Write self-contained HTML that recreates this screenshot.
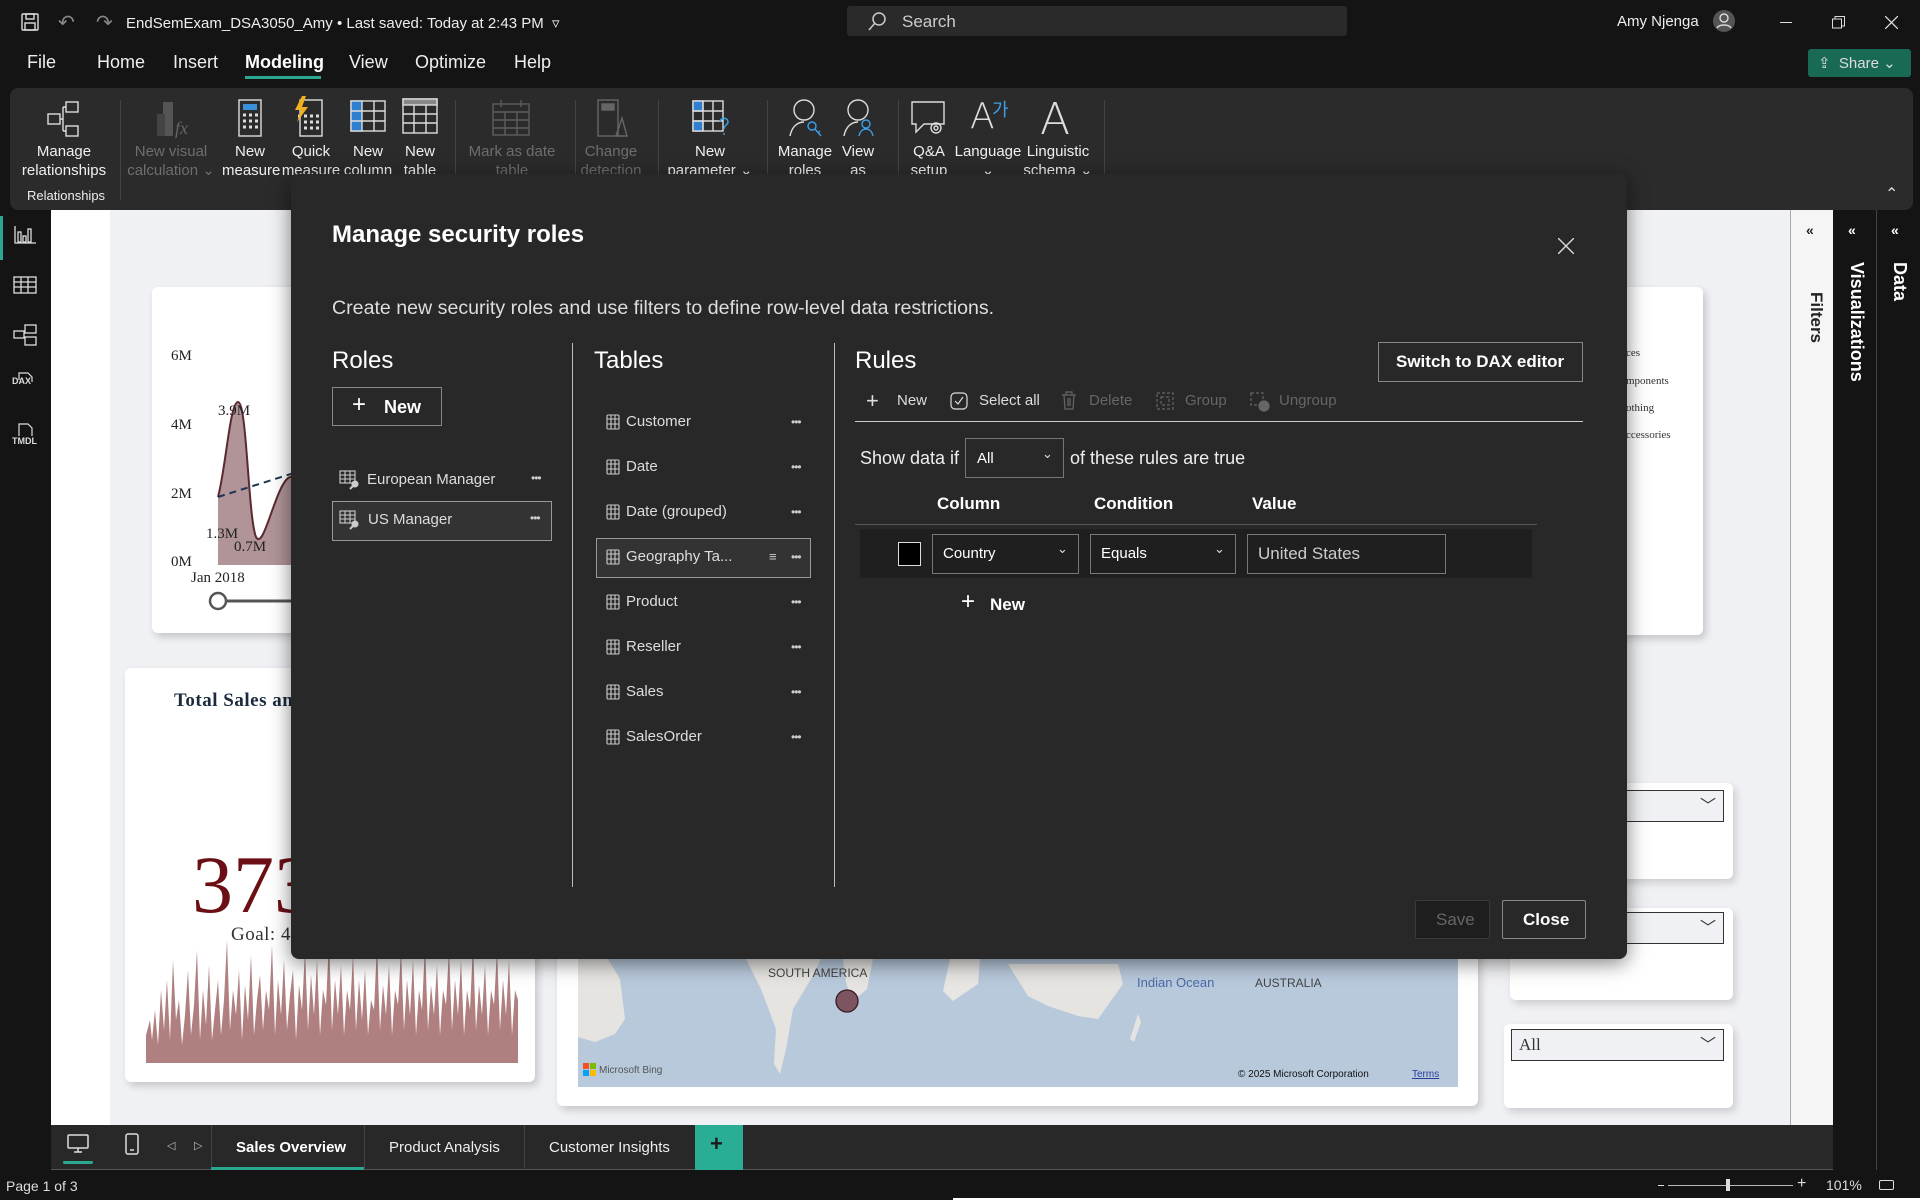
<!DOCTYPE html>
<html><head><meta charset="utf-8">
<style>
*{margin:0;padding:0;box-sizing:border-box}
body{width:1920px;height:1200px;overflow:hidden;background:#141414;font-family:"Liberation Sans",sans-serif;position:relative;color:#fff}
.a{position:absolute}
.t{position:absolute;white-space:nowrap}
.rl{position:absolute;font-size:15px;color:#f0f0f0;text-align:center;line-height:19px;white-space:nowrap}
.rl.g{color:#6e6e6e}
.dv{position:absolute;top:100px;width:1px;height:100px;background:#444}
.tb{position:absolute;left:606px;font-size:15px;color:#ddd}
.tb svg{position:absolute;left:0;top:1px}
.tb span{position:absolute;left:20px;top:0;white-space:nowrap}
.dots{position:absolute;left:791px;font-size:12px;color:#ccc;letter-spacing:-1px}
.serif{font-family:"Liberation Serif",serif}
</style></head><body>

<div class="a" style="left:0;top:0;width:1920px;height:44px;background:#141414"></div>
<svg class="a" style="left:20px;top:12px" width="20" height="20" viewBox="0 0 20 20" fill="none" stroke="#ddd" stroke-width="1.4"><rect x="2" y="2" width="16" height="16" rx="1"/><rect x="6" y="2" width="8" height="5"/><rect x="5" y="11" width="10" height="7"/></svg>
<div class="t" style="left:58px;top:10px;font-size:20px;color:#888">↶</div>
<div class="t" style="left:96px;top:10px;font-size:20px;color:#888">↷</div>
<div class="t" style="left:126px;top:14px;font-size:15px;color:#eee">EndSemExam_DSA3050_Amy • Last saved: Today at 2:43 PM &nbsp;▿</div>
<div class="a" style="left:847px;top:6px;width:500px;height:30px;background:#2a2a2a;border-radius:3px"></div>
<svg class="a" style="left:866px;top:11px" width="22" height="22" viewBox="0 0 22 22" fill="none" stroke="#ccc" stroke-width="1.5"><circle cx="13" cy="8" r="6"/><path d="M9 12 3 19"/></svg>
<div class="t" style="left:902px;top:12px;font-size:17px;color:#ccc">Search</div>
<div class="t" style="left:1617px;top:13px;font-size:15px;color:#eee">Amy Njenga</div>
<svg class="a" style="left:1712px;top:9px" width="24" height="24" viewBox="0 0 24 24"><circle cx="12" cy="12" r="11" fill="#555"/><circle cx="12" cy="9" r="4" fill="none" stroke="#ddd" stroke-width="1.4"/><path d="M5 19c2-4 12-4 14 0" fill="none" stroke="#ddd" stroke-width="1.4"/></svg>
<div class="a" style="left:1780px;top:22px;width:12px;height:1px;background:#ddd"></div>
<svg class="a" style="left:1832px;top:16px" width="13" height="13" viewBox="0 0 13 13" fill="none" stroke="#ddd"><rect x="0.5" y="3" width="9" height="9"/><path d="M3 3V.5h9.5V10H10"/></svg>
<svg class="a" style="left:1885px;top:16px" width="13" height="13" viewBox="0 0 13 13" stroke="#ddd" stroke-width="1.3"><path d="M0 0 13 13M13 0 0 13"/></svg>

<div class="t" style="left:27px;top:52px;font-size:18px;color:#eee">File</div>
<div class="t" style="left:97px;top:52px;font-size:18px;color:#eee">Home</div>
<div class="t" style="left:173px;top:52px;font-size:18px;color:#eee">Insert</div>
<div class="t" style="left:245px;top:52px;font-size:18px;color:#fff;font-weight:bold">Modeling</div>
<div class="a" style="left:245px;top:76px;width:76px;height:3px;background:#2aa88f"></div>
<div class="t" style="left:349px;top:52px;font-size:18px;color:#eee">View</div>
<div class="t" style="left:415px;top:52px;font-size:18px;color:#eee">Optimize</div>
<div class="t" style="left:514px;top:52px;font-size:18px;color:#eee">Help</div>
<div class="a" style="left:1808px;top:49px;width:103px;height:28px;background:#196a55;border-radius:3px"></div>
<div class="t" style="left:1818px;top:54px;font-size:15px;color:#ddd">⇪&nbsp; Share ⌄</div>

<div class="a" style="left:10px;top:88px;width:1903px;height:122px;background:#2b2b2b;border-radius:8px"></div>
<svg class="a" style="left:46px;top:100px" width="38" height="38" viewBox="0 0 38 38" fill="none" stroke="#ddd" stroke-width="1.4"><rect x="20" y="2" width="12" height="10"/><rect x="2" y="14" width="12" height="10"/><rect x="20" y="26" width="12" height="10"/><path d="M14 19h3M17 7v24M17 7h3M17 31h3"/></svg>
<div class="rl" style="left:14px;top:142px;width:100px">Manage<br>relationships</div>
<div class="t" style="left:27px;top:188px;font-size:13px;color:#eee">Relationships</div>
<div class="dv" style="left:120px"></div>
<svg class="a" style="left:155px;top:100px" width="34" height="38" viewBox="0 0 34 38"><rect x="8" y="2" width="10" height="34" fill="#555"/><rect x="2" y="14" width="8" height="22" fill="#444"/><text x="20" y="34" font-family="Liberation Serif" font-style="italic" font-size="18" fill="#666">fx</text></svg>
<div class="rl g" style="left:126px;top:142px;width:90px">New visual<br>calculation ⌄</div>
<svg class="a" style="left:237px;top:98px" width="26" height="40" viewBox="0 0 26 40" fill="none" stroke="#ddd" stroke-width="1.4"><rect x="2" y="2" width="22" height="36"/><rect x="6" y="6" width="14" height="6" fill="#3a8fd9" stroke="none"/><path d="M6 17h3M12 17h3M18 17h3M6 23h3M12 23h3M18 23h3M6 29h3M12 29h3M18 29h3" stroke-width="3"/></svg>
<div class="rl" style="left:222px;top:142px;width:56px">New<br>measure</div>
<svg class="a" style="left:292px;top:96px" width="34" height="42" viewBox="0 0 34 42" fill="none" stroke="#ddd" stroke-width="1.4"><rect x="8" y="4" width="22" height="36"/><path d="M6 20h3M12 20h3M18 20h3M24 20h3M12 26h3M18 26h3M24 26h3M12 32h3M18 32h3M24 32h3" stroke-width="3"/><path d="M10 0 3 14h6L5 26l11-15h-6l4-11z" fill="#f0b020" stroke="none"/></svg>
<div class="rl" style="left:280px;top:142px;width:62px">Quick<br>measure</div>
<svg class="a" style="left:350px;top:100px" width="36" height="32" viewBox="0 0 36 32" fill="none" stroke="#ddd" stroke-width="1.4"><rect x="1" y="1" width="34" height="30"/><rect x="1" y="1" width="11" height="30" fill="#2f7fd0"/><path d="M12 11h23M12 21h23M24 1v30M1 11h11M1 21h11" /></svg>
<div class="rl" style="left:340px;top:142px;width:56px">New<br>column</div>
<svg class="a" style="left:402px;top:98px" width="36" height="36" viewBox="0 0 36 36" fill="none" stroke="#ddd" stroke-width="1.4"><rect x="1" y="1" width="34" height="34"/><rect x="1" y="1" width="34" height="6" fill="#888"/><path d="M1 16h34M1 25h34M12 7v28M24 7v28"/></svg>
<div class="rl" style="left:396px;top:142px;width:48px">New<br>table</div>
<div class="dv" style="left:455px"></div>
<svg class="a" style="left:492px;top:100px" width="38" height="36" viewBox="0 0 38 36" fill="none" stroke="#5e5e5e" stroke-width="1.4"><rect x="1" y="4" width="36" height="31"/><path d="M1 12h36M1 20h36M1 28h36M13 12v23M25 12v23M9 0v7M29 0v7"/></svg>
<div class="rl g" style="left:462px;top:142px;width:100px">Mark as date<br>table</div>
<div class="dv" style="left:575px"></div>
<svg class="a" style="left:596px;top:98px" width="32" height="40" viewBox="0 0 32 40" fill="none" stroke="#666" stroke-width="1.4"><rect x="2" y="2" width="20" height="36"/><rect x="6" y="6" width="12" height="6" fill="#666"/><path d="M20 38 26 20l5 18z"/></svg>
<div class="rl g" style="left:571px;top:142px;width:80px">Change<br>detection</div>
<div class="dv" style="left:658px"></div>
<svg class="a" style="left:692px;top:100px" width="40" height="38" viewBox="0 0 40 38" fill="none" stroke="#ddd" stroke-width="1.4"><rect x="1" y="1" width="30" height="30"/><rect x="1" y="1" width="10" height="10" fill="#2f7fd0"/><rect x="1" y="21" width="10" height="10" fill="#2f7fd0"/><path d="M1 11h30M1 21h30M11 1v30M21 1v30"/><path d="M28 22c0-5 8-5 8 0 0 3-4 3-4 7M32 33v2" stroke="#3aa0e8"/></svg>
<div class="rl" style="left:665px;top:142px;width:90px">New<br>parameter ⌄</div>
<div class="dv" style="left:767px"></div>
<svg class="a" style="left:788px;top:98px" width="36" height="40" viewBox="0 0 36 40" fill="none" stroke="#ddd" stroke-width="1.4"><circle cx="16" cy="12" r="10"/><path d="M2 38c2-10 8-14 14-14"/><circle cx="24" cy="28" r="4" stroke="#3aa0e8"/><path d="M27 31l6 7M30 35l2-2" stroke="#3aa0e8"/></svg>
<div class="rl" style="left:774px;top:142px;width:62px">Manage<br>roles</div>
<svg class="a" style="left:840px;top:98px" width="36" height="40" viewBox="0 0 36 40" fill="none" stroke="#ddd" stroke-width="1.4"><circle cx="18" cy="12" r="10"/><path d="M4 38c2-10 8-14 14-14"/><circle cx="26" cy="26" r="4" stroke="#3aa0e8"/><path d="M19 38c1-5 4-7 7-7s6 2 7 7" stroke="#3aa0e8"/></svg>
<div class="rl" style="left:836px;top:142px;width:44px">View<br>as</div>
<div class="dv" style="left:898px"></div>
<svg class="a" style="left:910px;top:100px" width="38" height="38" viewBox="0 0 38 38" fill="none" stroke="#ddd" stroke-width="1.4"><path d="M2 2h32v22H14l-8 8v-8H2z"/><circle cx="26" cy="28" r="5"/><circle cx="26" cy="28" r="2"/></svg>
<div class="rl" style="left:899px;top:142px;width:60px">Q&amp;A<br>setup</div>
<div class="t" style="left:970px;top:96px;font-size:36px;color:#ddd;font-family:'DejaVu Sans',sans-serif;font-weight:200">A</div>
<div class="t" style="left:992px;top:96px;font-size:18px;color:#3aa0e8">가</div>
<div class="rl" style="left:954px;top:142px;width:68px">Language<br>⌄</div>
<div class="t" style="left:1040px;top:94px;font-size:44px;color:#ddd;font-family:'DejaVu Sans',sans-serif;font-weight:200">A</div>
<div class="rl" style="left:1022px;top:142px;width:72px">Linguistic<br>schema ⌄</div>
<div class="dv" style="left:1104px"></div>
<div class="t" style="left:1885px;top:184px;font-size:16px;color:#ddd">⌃</div>

<div class="a" style="left:0;top:210px;width:51px;height:915px;background:#141414"></div>
<div class="a" style="left:0;top:216px;width:3px;height:44px;background:#2aa88f"></div>
<svg class="a" style="left:14px;top:226px" width="22" height="18" viewBox="0 0 22 18" fill="none" stroke="#ddd" stroke-width="1.3"><path d="M1 0v17h21"/><rect x="4" y="6" width="3" height="10"/><rect x="9" y="10" width="3" height="6"/><rect x="14" y="3" width="3" height="13"/></svg>
<svg class="a" style="left:13px;top:276px" width="24" height="18" viewBox="0 0 24 18" fill="none" stroke="#ddd" stroke-width="1.3"><rect x="1" y="1" width="22" height="16"/><path d="M1 6h22M1 11h22M8 1v16M15 1v16"/></svg>
<svg class="a" style="left:13px;top:324px" width="24" height="22" viewBox="0 0 24 22" fill="none" stroke="#ddd" stroke-width="1.3"><rect x="12" y="1" width="11" height="8"/><rect x="1" y="7" width="10" height="7"/><rect x="12" y="13" width="11" height="8"/></svg>
<div class="t" style="left:12px;top:376px;font-size:9px;color:#ddd;font-weight:bold">DAX</div>
<svg class="a" style="left:16px;top:372px" width="20" height="16" viewBox="0 0 20 16" fill="none" stroke="#ddd" stroke-width="1.2"><path d="M3 8V1h9l4 4v5"/></svg>
<div class="t" style="left:12px;top:436px;font-size:9px;color:#ddd;font-weight:bold">TMDL</div>
<svg class="a" style="left:16px;top:423px" width="20" height="14" viewBox="0 0 20 14" fill="none" stroke="#ddd" stroke-width="1.2"><path d="M3 13V1h9l4 4v8"/></svg>

<div class="a" style="left:51px;top:210px;width:1739px;height:915px;background:#ffffff"></div>
<div class="a" style="left:110px;top:210px;width:1680px;height:915px;background:#f0f1f4"></div>

<div class="a" style="left:152px;top:287px;width:400px;height:346px;background:#fff;border-radius:6px;box-shadow:3px 4px 8px rgba(0,0,0,.18)"></div>
<svg class="a" style="left:152px;top:287px" width="145" height="346" viewBox="0 0 145 346">
<path d="M66 278V210C74 180 78 115 86 115C95 115 96 230 104 250C112 265 124 195 138 190C144 188 145 200 145 200V278Z" fill="#b09498"/>
<path d="M66 210C74 180 78 115 86 115C95 115 96 230 104 250C112 265 124 195 138 190C144 188 145 200 145 200" fill="none" stroke="#5a2a30" stroke-width="2"/>
<path d="M66 210L145 185" stroke="#1e3550" stroke-width="2" stroke-dasharray="7 5"/>
<g font-family="Liberation Serif" font-size="15" fill="#222">
<text x="19" y="73">6M</text><text x="19" y="142">4M</text><text x="19" y="211">2M</text><text x="19" y="279">0M</text>
<text x="66" y="128">3.9M</text><text x="54" y="251">1.3M</text><text x="82" y="264">0.7M</text><text x="138" y="242">1</text><text x="39" y="295">Jan 2018</text></g>
<path d="M66 314H145" stroke="#555" stroke-width="3"/>
<circle cx="66" cy="314" r="8" fill="#fff" stroke="#555" stroke-width="2.5"/>
</svg>

<div class="a" style="left:125px;top:668px;width:410px;height:414px;background:#fff;border-radius:6px;box-shadow:3px 4px 8px rgba(0,0,0,.18)"></div>
<svg class="a" style="left:146px;top:840px" width="372" height="225" viewBox="0 0 372 225">
<path d="M0 223V195L4 180 6 200 9 170 12 205 15 150 18 190 21 140 24 200 27 120 30 180 33 160 36 205 39 175 42 130 45 195 48 165 51 110 54 200 57 150 60 185 63 125 66 200 69 170 72 140 75 195 78 160 81 100 84 190 87 150 90 175 93 130 96 200 99 145 102 180 105 115 108 195 111 160 114 135 117 190 120 150 123 170 126 105 129 195 132 140 135 175 138 120 141 190 144 155 147 130 150 200 153 145 156 170 159 110 162 190 165 135 168 175 171 120 174 195 177 150 180 165 183 100 186 190 189 140 192 175 195 125 198 195 201 150 204 170 207 115 210 190 213 140 216 180 219 130 222 195 225 160 228 170 231 105 234 190 237 145 240 175 243 125 246 195 249 150 252 165 255 110 258 190 261 140 264 175 267 120 270 195 273 150 276 170 279 105 282 190 285 145 288 175 291 125 294 195 297 150 300 165 303 110 306 190 309 140 312 175 315 120 318 195 321 150 324 170 327 105 330 190 333 145 336 175 339 125 342 195 345 150 348 165 351 110 354 190 357 140 360 175 363 120 366 195 369 150 372 160V223Z" fill="#b08080"/>
</svg>
<div class="t serif" style="left:174px;top:690px;font-size:19px;font-weight:bold;color:#1b2a3d;letter-spacing:.5px">Total Sales an</div>
<div class="t serif" style="left:192px;top:838px;font-size:82px;color:#6b0f14">373</div>
<div class="t serif" style="left:231px;top:924px;font-size:19px;color:#333;letter-spacing:.5px">Goal: 4</div>

<div class="a" style="left:557px;top:940px;width:921px;height:166px;background:#fff;border-radius:6px;box-shadow:3px 4px 8px rgba(0,0,0,.18)"></div>
<svg class="a" style="left:578px;top:959px" width="880" height="128" viewBox="0 0 880 128">
<rect width="880" height="128" fill="#b8c9dc"/>
<path d="M0 0h30l12 20 5 40-10 15-20 8-17-5z" fill="#e6e4e0"/>
<path d="M168 0h75l-10 20-18 30-7 40-6 25-6-10 2-35-15-40z" fill="#e6e4e0"/>
<path d="M265 0h30l-6 30-15 13-6-20z" fill="#e6e4e0"/>
<path d="M372 0h30l-2 25-25 17-10-10z" fill="#e8e6e2"/>
<path d="M430 5h110l5 20-25 35-20-3-30-10-20-10z" fill="#e6e4e0"/>
<path d="M560 55l-8 25 4 3 7-20z" fill="#e6e4e0"/>
<text x="190" y="18" font-family="Liberation Sans" font-size="12" fill="#444">SOUTH AMERICA</text>
<text x="559" y="28" font-family="Liberation Sans" font-size="13" fill="#4a6aa8">Indian Ocean</text>
<text x="677" y="28" font-family="Liberation Sans" font-size="12" fill="#444">AUSTRALIA</text>
<ellipse cx="269" cy="42" rx="11" ry="11" fill="#7d5560" stroke="#3a1a20" stroke-width="1.3"/>
<rect x="5" y="104" width="6" height="6" fill="#f25022"/><rect x="12" y="104" width="6" height="6" fill="#7fba00"/><rect x="5" y="111" width="6" height="6" fill="#00a4ef"/><rect x="12" y="111" width="6" height="6" fill="#ffb900"/>
<text x="21" y="114" font-family="Liberation Sans" font-size="10" fill="#555">Microsoft Bing</text>
<text x="660" y="118" font-family="Liberation Sans" font-size="10" fill="#111">© 2025 Microsoft Corporation</text>
<text x="834" y="118" font-family="Liberation Sans" font-size="10" fill="#2a3d9a" text-decoration="underline">Terms</text>
</svg>

<div class="a" style="left:1580px;top:287px;width:123px;height:348px;background:#fff;border-radius:6px;box-shadow:3px 4px 8px rgba(0,0,0,.18)"></div>
<div class="t serif" style="left:1626px;top:347px;font-size:11px;color:#333">ces</div>
<div class="t serif" style="left:1626px;top:375px;font-size:11px;color:#333">mponents</div>
<div class="t serif" style="left:1626px;top:402px;font-size:11px;color:#333">othing</div>
<div class="t serif" style="left:1626px;top:429px;font-size:11px;color:#333">ccessories</div>
<div class="a" style="left:1560px;top:783px;width:173px;height:96px;background:#fff;border-radius:6px;box-shadow:3px 4px 8px rgba(0,0,0,.15)"></div>
<div class="a" style="left:1560px;top:790px;width:164px;height:32px;border:1.5px solid #333;background:#f0f1f4"></div>
<div class="t" style="left:1700px;top:792px;font-size:16px;color:#333">﹀</div>
<div class="a" style="left:1510px;top:908px;width:223px;height:92px;background:#fff;border-radius:6px;box-shadow:3px 4px 8px rgba(0,0,0,.15)"></div>
<div class="a" style="left:1560px;top:912px;width:164px;height:32px;border:1.5px solid #333;background:#f0f1f4"></div>
<div class="t" style="left:1700px;top:914px;font-size:16px;color:#333">﹀</div>
<div class="a" style="left:1504px;top:1024px;width:229px;height:84px;background:#fff;border-radius:6px;box-shadow:3px 4px 8px rgba(0,0,0,.15)"></div>
<div class="a" style="left:1511px;top:1029px;width:213px;height:32px;border:1.5px solid #333;background:#f0f1f4"></div>
<div class="t serif" style="left:1519px;top:1035px;font-size:17px;color:#333">All</div>
<div class="t" style="left:1700px;top:1031px;font-size:16px;color:#333">﹀</div>

<div class="a" style="left:1790px;top:210px;width:43px;height:915px;background:#f5f5f5;border-left:1px solid #aaa"></div>
<div class="t" style="left:1806px;top:222px;font-size:14px;color:#222;font-weight:bold">«</div>
<div class="t" style="left:1826px;top:292px;font-size:17px;color:#222;font-weight:bold;transform:rotate(90deg);transform-origin:0 0">Filters</div>
<div class="a" style="left:1833px;top:210px;width:44px;height:960px;background:#141414;border-right:1px solid #444"></div>
<div class="t" style="left:1848px;top:222px;font-size:14px;color:#fff;font-weight:bold">«</div>
<div class="t" style="left:1867px;top:262px;font-size:18px;color:#fff;font-weight:bold;transform:rotate(90deg);transform-origin:0 0">Visualizations</div>
<div class="a" style="left:1877px;top:210px;width:43px;height:960px;background:#141414"></div>
<div class="t" style="left:1891px;top:222px;font-size:14px;color:#fff;font-weight:bold">«</div>
<div class="t" style="left:1910px;top:262px;font-size:18px;color:#fff;font-weight:bold;transform:rotate(90deg);transform-origin:0 0">Data</div>

<div class="a" style="left:51px;top:1125px;width:1782px;height:45px;background:#282828;border-bottom:1px solid #555"></div>
<svg class="a" style="left:66px;top:1134px" width="24" height="20" viewBox="0 0 24 20" fill="none" stroke="#ddd" stroke-width="1.5"><rect x="2" y="1" width="20" height="13" rx="1"/><path d="M8 18h8M12 14v4"/></svg>
<div class="a" style="left:63px;top:1161px;width:30px;height:3px;background:#2aa88f;border-radius:2px"></div>
<svg class="a" style="left:125px;top:1133px" width="14" height="22" viewBox="0 0 14 22" fill="none" stroke="#ddd" stroke-width="1.5"><rect x="1" y="1" width="12" height="20" rx="2"/><path d="M5 17h4"/></svg>
<div class="t" style="left:167px;top:1139px;font-size:11px;color:#bbb">◁</div>
<div class="t" style="left:194px;top:1139px;font-size:11px;color:#bbb">▷</div>
<div class="a" style="left:211px;top:1125px;width:1px;height:45px;background:#444"></div>
<div class="a" style="left:211px;top:1167px;width:153px;height:3px;background:#2aa88f"></div>
<div class="t" style="left:236px;top:1139px;font-size:15px;color:#fff;font-weight:bold">Sales Overview</div>
<div class="a" style="left:364px;top:1125px;width:1px;height:45px;background:#444"></div>
<div class="t" style="left:389px;top:1139px;font-size:15px;color:#eee">Product Analysis</div>
<div class="a" style="left:524px;top:1125px;width:1px;height:45px;background:#444"></div>
<div class="t" style="left:549px;top:1139px;font-size:15px;color:#eee">Customer Insights</div>
<div class="a" style="left:695px;top:1125px;width:48px;height:45px;background:#2aad95"></div>
<div class="t" style="left:710px;top:1131px;font-size:22px;color:#1b1b1b;font-weight:bold">+</div>

<div class="t" style="left:6px;top:1178px;font-size:14px;color:#ddd">Page 1 of 3</div>
<div class="a" style="left:1658px;top:1185px;width:6px;height:1px;background:#ddd"></div>
<div class="a" style="left:1668px;top:1185px;width:125px;height:1px;background:#bbb"></div>
<div class="a" style="left:1726px;top:1179px;width:4px;height:12px;background:#ddd"></div>
<div class="t" style="left:1797px;top:1175px;font-size:16px;color:#ddd">+</div>
<div class="t" style="left:1826px;top:1177px;font-size:14px;color:#ddd">101%</div>
<div class="a" style="left:1879px;top:1180px;width:15px;height:10px;border:1.3px solid #ddd;border-radius:2px"></div>
<div class="a" style="left:953px;top:1198px;width:967px;height:2px;background:#fff"></div>

<div class="a" style="left:291px;top:174px;width:1336px;height:785px;background:#282828;border-radius:8px;box-shadow:0 4px 20px rgba(0,0,0,.5)"></div>
<div class="t" style="left:332px;top:221px;font-size:24px;color:#fff;font-weight:bold">Manage security roles</div>
<svg class="a" style="left:1558px;top:238px" width="16" height="16" viewBox="0 0 16 16" stroke="#ddd" stroke-width="1.4"><path d="M0 0 16 16M16 0 0 16"/></svg>
<div class="t" style="left:332px;top:297px;font-size:19.6px;color:#ddd">Create new security roles and use filters to define row-level data restrictions.</div>

<div class="t" style="left:332px;top:347px;font-size:24px;color:#fff">Roles</div>
<div class="a" style="left:332px;top:387px;width:110px;height:39px;border:1px solid #888"></div>
<div class="t" style="left:352px;top:391px;font-size:24px;color:#fff;font-weight:200">+</div>
<div class="t" style="left:384px;top:397px;font-size:18px;color:#fff;font-weight:bold">New</div>
<svg class="a" style="left:339px;top:470px" width="22" height="20" viewBox="0 0 22 20" fill="none" stroke="#ccc" stroke-width="1.1"><rect x="1" y="1" width="15" height="12"/><path d="M1 5h15M1 9h15M6 1v12M11 1v12"/><circle cx="16" cy="14" r="3" fill="#ccc"/><path d="M14 16l-3 3" stroke-width="2"/></svg>
<div class="t" style="left:367px;top:471px;font-size:15px;color:#ddd">European Manager</div>
<div class="dots" style="left:531px;top:471px">•••</div>
<div class="a" style="left:332px;top:501px;width:220px;height:40px;border:1px solid #999;background:#333"></div>
<svg class="a" style="left:339px;top:510px" width="22" height="20" viewBox="0 0 22 20" fill="none" stroke="#ccc" stroke-width="1.1"><rect x="1" y="1" width="15" height="12"/><path d="M1 5h15M1 9h15M6 1v12M11 1v12"/><circle cx="16" cy="14" r="3" fill="#ccc"/><path d="M14 16l-3 3" stroke-width="2"/></svg>
<div class="t" style="left:368px;top:511px;font-size:15px;color:#ddd">US Manager</div>
<div class="dots" style="left:530px;top:511px">•••</div>

<div class="a" style="left:572px;top:343px;width:1px;height:544px;background:#bbb"></div>
<div class="t" style="left:594px;top:347px;font-size:24px;color:#fff">Tables</div>

<div class="a" style="left:596px;top:538px;width:215px;height:40px;border:1px solid #999;background:#333"></div>
<svg width="0" height="0" style="position:absolute"><defs><g id="ti" fill="none" stroke="#ccc" stroke-width="1.1"><rect x="1" y="1" width="12" height="14" rx="1"/><path d="M1 5h12M1 10h12M5 1v14M9 1v14"/></g></defs></svg>
<div class="tb" style="top:413px"><svg width="14" height="16"><use href="#ti"/></svg><span>Customer</span></div>
<div class="tb" style="top:458px"><svg width="14" height="16"><use href="#ti"/></svg><span>Date</span></div>
<div class="tb" style="top:503px"><svg width="14" height="16"><use href="#ti"/></svg><span>Date (grouped)</span></div>
<div class="tb" style="top:548px"><svg width="14" height="16"><use href="#ti"/></svg><span>Geography Ta...</span></div>
<div class="tb" style="top:593px"><svg width="14" height="16"><use href="#ti"/></svg><span>Product</span></div>
<div class="tb" style="top:638px"><svg width="14" height="16"><use href="#ti"/></svg><span>Reseller</span></div>
<div class="tb" style="top:683px"><svg width="14" height="16"><use href="#ti"/></svg><span>Sales</span></div>
<div class="tb" style="top:728px"><svg width="14" height="16"><use href="#ti"/></svg><span>SalesOrder</span></div>
<div class="dots" style="top:415px">•••</div>
<div class="dots" style="top:460px">•••</div>
<div class="dots" style="top:505px">•••</div>
<div class="dots" style="top:550px">•••</div>
<div class="t" style="left:769px;top:549px;font-size:13px;color:#ccc">≡</div>
<div class="dots" style="top:595px">•••</div>
<div class="dots" style="top:640px">•••</div>
<div class="dots" style="top:685px">•••</div>
<div class="dots" style="top:730px">•••</div>

<div class="a" style="left:834px;top:343px;width:1px;height:544px;background:#bbb"></div>
<div class="t" style="left:855px;top:347px;font-size:24px;color:#fff">Rules</div>
<div class="a" style="left:1378px;top:342px;width:205px;height:40px;border:1px solid #888"></div>
<div class="t" style="left:1396px;top:352px;font-size:17px;color:#fff;font-weight:bold">Switch to DAX editor</div>

<div class="t" style="left:866px;top:388px;font-size:22px;color:#ddd;font-weight:200">+</div>
<div class="t" style="left:897px;top:392px;font-size:15px;color:#ddd">New</div>
<svg class="a" style="left:950px;top:392px" width="18" height="18" viewBox="0 0 18 18" fill="none" stroke="#ddd" stroke-width="1.2"><rect x="1" y="1" width="16" height="16" rx="4"/><path d="M5 9l3 3 5-7"/></svg>
<div class="t" style="left:979px;top:392px;font-size:15px;color:#ddd">Select all</div>
<svg class="a" style="left:1061px;top:391px" width="16" height="19" viewBox="0 0 16 19" fill="none" stroke="#666" stroke-width="1.2"><path d="M1 4h14M5 4V1h6v3M3 4l1 14h8l1-14M7 7v8M9 7v8"/></svg>
<div class="t" style="left:1089px;top:392px;font-size:15px;color:#666">Delete</div>
<svg class="a" style="left:1156px;top:392px" width="18" height="18" viewBox="0 0 18 18" fill="none" stroke="#666" stroke-width="1.2" stroke-dasharray="3 2"><rect x="1" y="1" width="16" height="16"/><rect x="5" y="5" width="8" height="8"/></svg>
<div class="t" style="left:1185px;top:392px;font-size:15px;color:#666">Group</div>
<svg class="a" style="left:1250px;top:392px" width="20" height="20" viewBox="0 0 20 20" fill="none" stroke="#666" stroke-width="1.2"><rect x="1" y="1" width="12" height="12" stroke-dasharray="3 2"/><circle cx="14" cy="14" r="5" fill="#666"/></svg>
<div class="t" style="left:1279px;top:392px;font-size:15px;color:#666">Ungroup</div>
<div class="a" style="left:855px;top:421px;width:728px;height:1px;background:#ccc"></div>

<div class="t" style="left:860px;top:448px;font-size:18px;color:#eee">Show data if</div>
<div class="a" style="left:965px;top:438px;width:99px;height:40px;border:1px solid #777"></div>
<div class="t" style="left:977px;top:450px;font-size:15px;color:#fff">All</div>
<div class="t" style="left:1042px;top:446px;font-size:13px;color:#ddd">⌄</div>
<div class="t" style="left:1070px;top:448px;font-size:18px;color:#eee">of these rules are true</div>

<div class="t" style="left:937px;top:494px;font-size:17px;color:#fff;font-weight:bold">Column</div>
<div class="t" style="left:1094px;top:494px;font-size:17px;color:#fff;font-weight:bold">Condition</div>
<div class="t" style="left:1252px;top:494px;font-size:17px;color:#fff;font-weight:bold">Value</div>
<div class="a" style="left:855px;top:524px;width:682px;height:1px;background:#555"></div>
<div class="a" style="left:860px;top:529px;width:672px;height:49px;background:#1f1f1f"></div>
<div class="a" style="left:898px;top:542px;width:23px;height:24px;background:#000;border:1px solid #ddd"></div>
<div class="a" style="left:932px;top:534px;width:147px;height:40px;border:1px solid #777"></div>
<div class="t" style="left:943px;top:545px;font-size:15px;color:#fff">Country</div>
<div class="t" style="left:1057px;top:541px;font-size:13px;color:#ddd">⌄</div>
<div class="a" style="left:1090px;top:534px;width:146px;height:40px;border:1px solid #777"></div>
<div class="t" style="left:1101px;top:545px;font-size:15px;color:#fff">Equals</div>
<div class="t" style="left:1214px;top:541px;font-size:13px;color:#ddd">⌄</div>
<div class="a" style="left:1247px;top:534px;width:199px;height:40px;border:1px solid #777"></div>
<div class="t" style="left:1258px;top:544px;font-size:17px;color:#ccc">United States</div>

<div class="t" style="left:961px;top:588px;font-size:24px;color:#fff;font-weight:200">+</div>
<div class="t" style="left:990px;top:595px;font-size:17px;color:#fff;font-weight:bold">New</div>

<div class="a" style="left:1415px;top:900px;width:75px;height:39px;background:#1e1e1e;border:1px solid #3a3a3a;border-radius:2px"></div>
<div class="t" style="left:1436px;top:910px;font-size:17px;color:#666">Save</div>
<div class="a" style="left:1502px;top:900px;width:84px;height:39px;border:1px solid #888;border-radius:2px"></div>
<div class="t" style="left:1523px;top:910px;font-size:17px;color:#fff;font-weight:bold">Close</div>

</body></html>
